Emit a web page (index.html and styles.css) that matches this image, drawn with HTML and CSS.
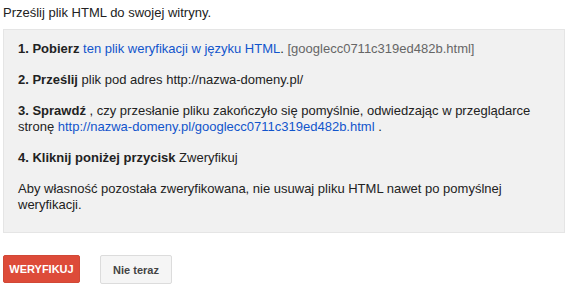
FILE: index.html
```html
<!DOCTYPE html>
<html lang="pl">
<head>
<meta charset="utf-8">
<link rel="stylesheet" href="styles.css">
</head>
<body>
<div class="page">
  <p class="title">Prześlij plik HTML do swojej witryny.</p>
  <div class="box">
    <p><b>1. Pobierz</b> <a href="#">ten plik weryfikacji w języku HTML</a>. <span class="muted">[googlecc0711c319ed482b.html]</span></p>
    <p><b>2. Prześlij</b> plik pod adres http://nazwa-domeny.pl/</p>
    <p><b>3. Sprawdź</b> , czy przesłanie pliku zakończyło się pomyślnie, odwiedzając w przeglądarce stronę <a href="#">http://nazwa-domeny.pl/googlecc0711c319ed482b.html</a> .</p>
    <p><b>4. Kliknij poniżej przycisk</b> Zweryfikuj</p>
    <p>Aby własność pozostała zweryfikowana, nie usuwaj pliku HTML nawet po pomyślnej weryfikacji.</p>
  </div>
  <div class="actions">
    <button class="btn btn-primary">WERYFIKUJ</button>
    <button class="btn btn-default">Nie teraz</button>
  </div>
</div>
</body>
</html>
```
FILE: styles.css
```css
html, body {
  margin: 0;
  padding: 0;
  background: #fff;
}
body {
  font-family: Arial, "Liberation Sans", sans-serif;
  font-size: 13px;
  color: #222;
}
.page {
  width: 562px;
  padding: 5px 0 0 3px;
}
.title {
  margin: 0 0 8px;
  line-height: 16px;
}
.box {
  background: #f1f1f1;
  border: 1px solid #e5e5e5;
  padding: 11px 14px 19px;
}
.box p {
  margin: 0 0 15px;
  line-height: 16px;
}
.box p:last-child {
  margin-bottom: 0;
}
.box b {
  font-weight: bold;
}
.box a {
  color: #15c;
  text-decoration: none;
}
.muted {
  color: #666;
}
.actions {
  display: flex;
  align-items: flex-start;
  gap: 20px;
  margin-top: 22px;
}
.btn {
  box-sizing: border-box;
  font-family: Arial, "Liberation Sans", sans-serif;
  font-size: 11px;
  font-weight: bold;
  border-radius: 2px;
  padding: 0;
  white-space: nowrap;
  cursor: pointer;
}
.btn-primary {
  background: #dd4b39;
  border: 1px solid #d14836;
  color: #fff;
  width: 77px;
  height: 28px;
}
.btn-default {
  background: #f5f5f5;
  border: 1px solid #dcdcdc;
  color: #444;
  width: 72px;
  height: 29px;
}
```
